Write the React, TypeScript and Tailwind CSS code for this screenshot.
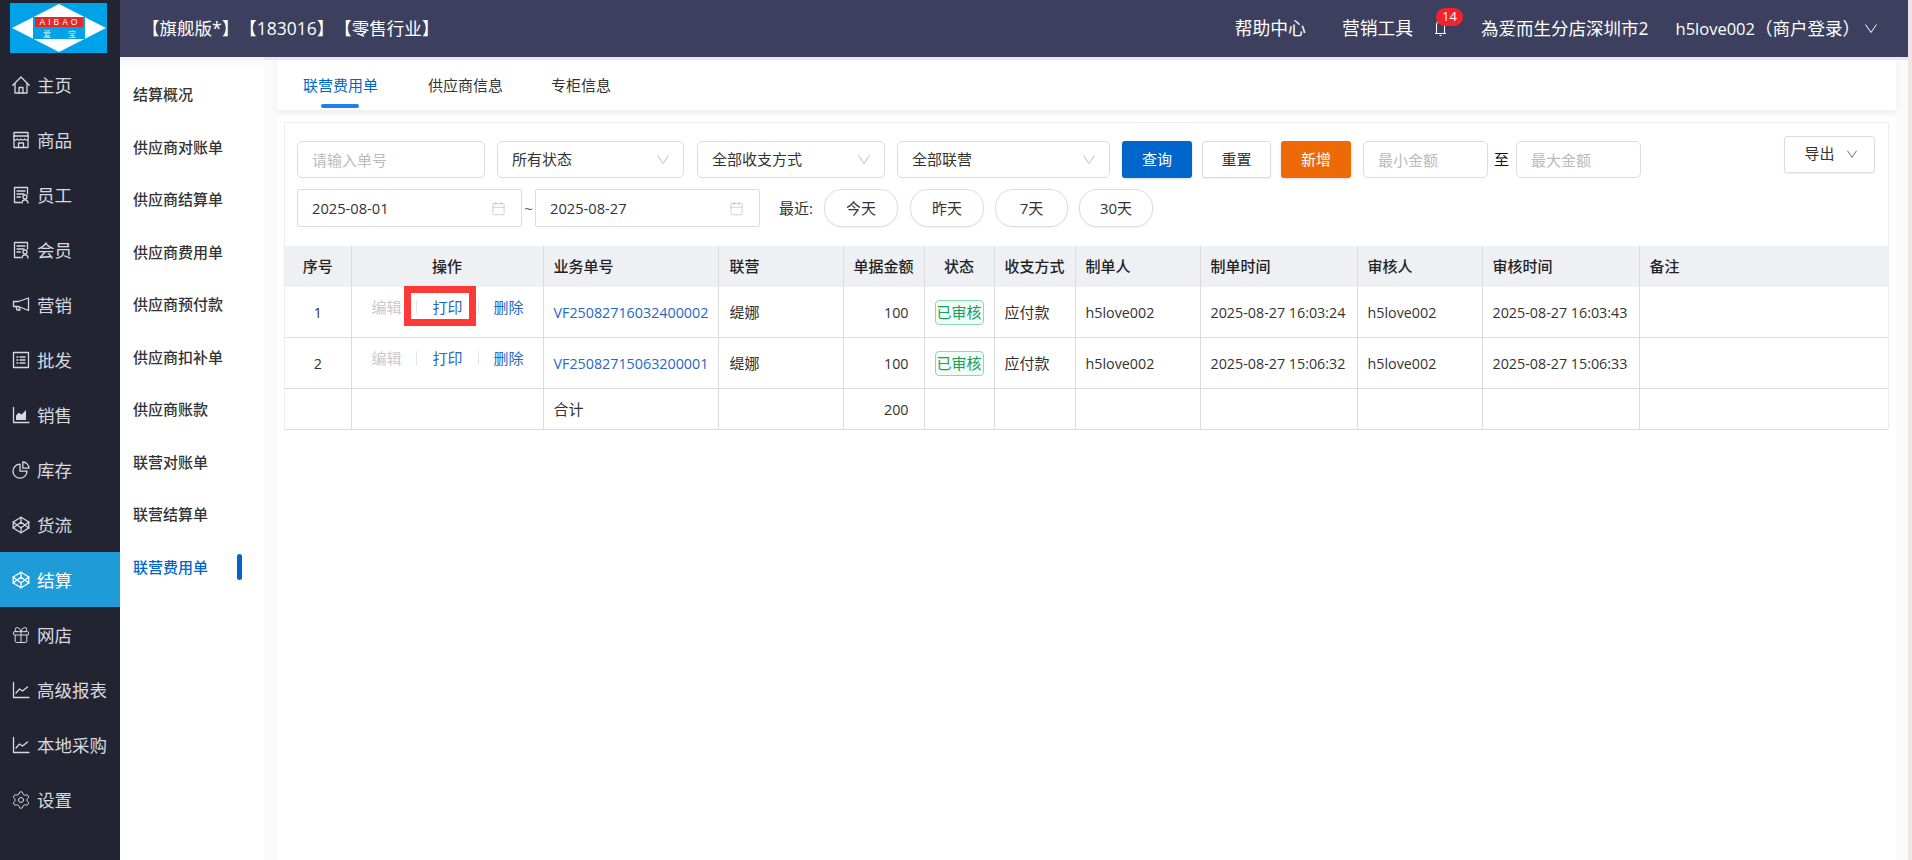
import React from "react";
import { Gift, Settings, Calendar } from "lucide-react";

const S = { fill: "none", stroke: "currentColor", strokeWidth: 1.3, strokeLinejoin: "round" as const, strokeLinecap: "round" as const };
const Svg = ({ children }: { children: React.ReactNode }) => (
  <svg width="18" height="18" viewBox="0 0 18 18" {...S} className="shrink-0">{children}</svg>
);
const Home = () => <Svg><path d="M.8 9.2 9 1l8.2 8.2" /><path d="M3 7.5V17h12V7.5" /><path d="M7 17v-5.5h4V17" /></Svg>;
const Store = () => <Svg><path d="M2 5V1.5h14V5" /><path d="M1.8 5h14.4v3a2 2 0 0 1-3.6 0 2 2 0 0 1-3.6 0 2 2 0 0 1-3.6 0 2 2 0 0 1-3.6 0z" /><path d="M2 9v7.5h14V9" /><path d="M6.5 16.5v-4.5h5v4.5" /></Svg>;
const Staff = () => <Svg><path d="M15.5 8V1.5h-13v15h6" /><path d="M5 5h8M5 8h7M5 11h3.5" /><circle cx="13" cy="11" r="2" /><path d="M10 17c0-2 1.300-3.200 3-3.200s3 1.200 3 3.200" /></Svg>;
const Horn = () => <Svg><path d="M16.500 2 6.500 5.500H1.500v5h5l10 4z" /><path d="M4 10.500 5 14h3l-.8-2.500" /></Svg>;
const ListBox = () => <Svg><rect x="1.500" y="1.500" width="15" height="15" /><path d="M8 6h5M8 9h5M8 12h5" /><path d="M5 6h.8M5 9h.8M5 12h.8" strokeWidth="1.600" /></Svg>;
const AreaChart = () => <Svg><path d="M1.500 1.500v15h15.500" /><path d="M4 14V9.500l2.700-2.700 3 1.800L14 4v10z" fill="currentColor" stroke="none" /></Svg>;
const Pie = () => <Svg><path d="M8 3.200a7 7 0 1 0 7 7H8z" /><path d="M10.800 1a6.500 6.500 0 0 1 6.200 6.200h-6.200z" /></Svg>;
const Cube = () => <Svg><path d="M9 1.200 16.800 6v6L9 16.800 1.200 12V6z" /><path d="M9 6.200 13 9l-4 2.800L5 9z" /><path d="M9 1.200v5M9 11.800v5M1.200 6 5 9 1.200 12M16.800 6 13 9l3.800 3" /></Svg>;
const Line = () => <Svg><path d="M1.500 1.500v15h15.500" /><path d="M4 12l3.500-4 3 2 5-4" /></Svg>;
const Chevron = ({ w = 12, h = 9, c = "#bdbdbd" }: { w?: number; h?: number; c?: string }) => (
  <svg width={w} height={h} viewBox="0 0 12 9" fill="none" stroke={c} strokeWidth="1" className="shrink-0"><path d="M.5.5 6 8.500 11.500.5" /></svg>
);
const Bell = () => (
  <svg width="13" height="17" viewBox="0 0 13 17" fill="none" stroke="#fff" strokeWidth="1.100"><path d="M1 13.500h11M2.500 13.500V5a4 4 0 0 1 8 0v8.500" /><path d="M5.500 15.500h2" /></svg>
);

const menu: [string, React.ReactNode][] = [
  ["主页", <Home />], ["商品", <Store />], ["员工", <Staff />], ["会员", <Staff />], ["营销", <Horn />],
  ["批发", <ListBox />], ["销售", <AreaChart />], ["库存", <Pie />], ["货流", <Cube />], ["结算", <Cube />],
  ["网店", <Gift size={20} strokeWidth={1.2} className="shrink-0 -mx-px" />], ["高级报表", <Line />], ["本地采购", <Line />], ["设置", <Settings size={20} strokeWidth={1.2} className="shrink-0 -mx-px" />],
];
const sub = ["结算概况", "供应商对账单", "供应商结算单", "供应商费用单", "供应商预付款", "供应商扣补单", "供应商账款", "联营对账单", "联营结算单", "联营费用单"];

const Latin = ({ children }: { children: React.ReactNode }) => <span className="text-[14.300px]">{children}</span>;

function Select({ label, w }: { label: string; w: string }) {
  return (
    <div className={`${w} h-[37px] shrink-0 flex items-center justify-between pl-[14px] pr-[14px] border border-[#dcdcdc] rounded-[5px] bg-white text-[#333]`}>
      <span>{label}</span>
      <Chevron />
    </div>
  );
}
function DateBox({ v, w }: { v: string; w: string }) {
  return (
    <div className={`${w} h-[38px] shrink-0 flex items-center justify-between pl-[14px] pr-[15px] border border-[#dcdcdc] rounded-[2px] bg-white text-[#333]`}>
      <span className="text-[14.700px]">{v}</span>
      <Calendar size={15} strokeWidth={1} color="#b5b5b5" />
    </div>
  );
}
const Pill = ({ t, w }: { t: string; w: string }) => (
  <div className={`${w} h-[38px] flex items-center justify-center rounded-[18px] border border-[#dddddd] bg-white text-[#333] shadow-[0_1px_2px_rgba(0,0,0,0.06)]`}>{t}</div>
);

const Ops = ({ boxed }: { boxed?: boolean }) => (
  <div className="relative h-[50px]">
    <div className="flex items-center justify-center h-full pb-[10px] pl-[1px]">
      <span className="text-[#c8c8c8]">编辑</span>
      <span className="mx-[15px] w-px h-[14px] bg-[#e4e4e4]" />
      <span className="text-[#2468c8]">打印</span>
      <span className="mx-[15px] w-px h-[14px] bg-[#e4e4e4]" />
      <span className="text-[#2468c8]">删除</span>
    </div>
    {boxed && <div className="absolute left-[52px] top-[-1px] w-[72px] h-[40px] border-[7px] border-[#ff3838]" />}
  </div>
);

const Tag = () => (
  <span className="inline-flex items-center justify-center w-[49px] h-[25px] rounded-[4px] border border-[#86dcae] bg-[#f2fbf6] text-[#18a058] whitespace-nowrap">已审核</span>
);

const th = "border-r border-[#dcdcdc] font-medium text-[#222] align-middle";
const td = "border-r border-b border-[#dcdcdc] p-0 align-middle text-[#333]";

function Row({ n, code, t1, t2, boxed }: { n: string; code: string; t1: string; t2: string; boxed?: boolean }) {
  return (
    <tr className={n === "1" ? "h-[50px]" : "h-[51px]"}>
      <td className={`${td} text-center`}><Latin>{n}</Latin></td>
      <td className={td}><Ops boxed={boxed} /></td>
      <td className={`${td} pl-[10px] text-[#2468c8]`}><Latin>{code}</Latin></td>
      <td className={`${td} pl-[11px]`}>缇娜</td>
      <td className={`${td} text-right pr-[15px]`}><Latin>100</Latin></td>
      <td className={`${td} text-center`}><Tag /></td>
      <td className={`${td} pl-[10px]`}>应付款</td>
      <td className={`${td} pl-[10px]`}><Latin>h5love002</Latin></td>
      <td className={`${td} pl-[10px]`}><Latin>{t1}</Latin></td>
      <td className={`${td} pl-[10px]`}><Latin>h5love002</Latin></td>
      <td className={`${td} pl-[10px]`}><Latin>{t2}</Latin></td>
      <td className={`${td} border-r-0`}></td>
    </tr>
  );
}

export default function App() {
  return (
    <div className="w-[1912px] h-[860px] flex overflow-hidden bg-[#f0e4e4] text-[15px] [text-spacing-trim:space-all] font-['Open_Sans','Noto_Sans_CJK_SC',sans-serif]">
      <aside className="w-[120px] shrink-0 bg-[#222531] text-[#d8d9e0]">
        <div className="h-[57px] pl-[10px] pt-[3px]">
          <svg width="97" height="50" viewBox="0 0 97 50">
            <rect width="97" height="50" fill="#00a2e8" />
            <polygon points="2,25 49,1 96,25 49,49" fill="#fff" />
            <rect x="23" y="14" width="52" height="22" fill="#00a2e8" />
            <rect x="25" y="14" width="48" height="10" fill="#e02a2a" />
            <text x="50" y="22" textAnchor="middle" fill="#fff" fontSize="8.500" letterSpacing="3" fontFamily="Liberation Sans, sans-serif">AIBAO</text>
            <text x="37" y="33.500" textAnchor="middle" fill="#dff3ff" fontSize="8" fontFamily="Noto Sans CJK SC, sans-serif">爱</text>
            <text x="62" y="33.500" textAnchor="middle" fill="#dff3ff" fontSize="8" fontFamily="Noto Sans CJK SC, sans-serif">宝</text>
          </svg>
        </div>
        {menu.map(([t, ic]) => (
          <div key={t} className={`h-[55px] flex items-center gap-[7px] pl-[12px] text-[17.500px] whitespace-nowrap ${t === "结算" ? "bg-[#1f9bd7] text-white" : ""}`}>
            {ic}
            <span className="pt-px">{t}</span>
          </div>
        ))}
      </aside>

      <div className="w-[1788px] shrink-0 flex flex-col">
        <header className="h-[57px] shrink-0 bg-[#3d3f5e] text-white flex items-center pl-[22px] pr-[31px] text-[17.500px] whitespace-nowrap">
          <div>【旗舰版*】【183016】【零售行业】</div>
          <div className="ml-auto flex items-center">
            <span className="text-[17.800px]">帮助中心</span>
            <span className="ml-[36px] text-[17.800px]">营销工具</span>
            <div className="relative ml-[21px] flex items-center">
              <Bell />
              <span className="absolute left-[2px] top-[-12px] w-[27px] h-[18px] rounded-full bg-[#f5222d] text-white text-[13px] flex items-center justify-center">14</span>
            </div>
            <span className="ml-[34px]">為爱而生分店深圳市2</span>
            <span className="ml-[27px]"><span className="text-[16.500px]">h5love002</span>（商户登录）</span>
            <span className="ml-[5px]"><Chevron c="#ffffff" /></span>
          </div>
        </header>

        <div className="flex-1 flex min-h-0">
          <nav className="w-[144px] shrink-0 bg-white">
            <div className="h-[11px] bg-linear-to-b from-[#f3f3f6] to-white" />
            {sub.map((t, i) => (
              <div key={t + i} className={`relative h-[52.500px] flex items-center pl-[13px] font-medium whitespace-nowrap ${i === 9 ? "text-[#0066cc]" : "text-[#333]"}`}>
                {t}
                {i === 9 && <span className="absolute left-[117px] top-[13px] w-[5px] h-[26px] rounded-[3px] bg-[#0066cc]" />}
              </div>
            ))}
          </nav>

          <main className="flex-1 flex flex-col bg-[#fafafa] pl-[13px] pr-[12px] border-t-[3px] border-[#e8e8f0]">
            <div className="h-[50px] shrink-0 bg-white flex items-start pl-[26px] shadow-[0_2px_6px_rgba(0,0,0,0.06)] text-[#333]">
              <div className="relative h-[50px] flex items-center mr-[50px] text-[#0066cc]">
                联营费用单
                <span className="absolute left-[18px] top-[44px] w-[38px] h-[4px] rounded-[2px] bg-[#2080f0]" />
              </div>
              <div className="h-[50px] flex items-center mr-[48px]">供应商信息</div>
              <div className="h-[50px] flex items-center">专柜信息</div>
            </div>

            <div className="flex-1 mt-[6px] bg-white px-[7px] pt-[6px]">
              <section className="border border-b-0 border-[#eeeeee]">
                <div className="px-[12px] pt-[18px] pb-[19px]">
                  <div className="flex items-start">
                    <input placeholder="请输入单号" className="w-[188px] h-[37px] px-[14px] border border-[#dcdcdc] rounded-[5px] outline-none placeholder:text-[#bbbbbb]" />
                    <div className="ml-[12px]"><Select label="所有状态" w="w-[187px]" /></div>
                    <div className="ml-[13px]"><Select label="全部收支方式" w="w-[188px]" /></div>
                    <div className="ml-[12px]"><Select label="全部联营" w="w-[213px]" /></div>
                    <button className="ml-[12px] w-[70px] h-[37px] rounded-[3px] bg-[#0066cc] text-white shadow-[0_1px_3px_rgba(0,0,0,0.15)]">查询</button>
                    <button className="ml-[10px] w-[69px] h-[37px] rounded-[3px] border border-[#dcdcdc] bg-white text-[#333] shadow-[0_1px_2px_rgba(0,0,0,0.08)]">重置</button>
                    <button className="ml-[10px] w-[70px] h-[37px] rounded-[3px] bg-[#ee6a06] text-white shadow-[0_1px_3px_rgba(0,0,0,0.15)]">新增</button>
                    <input placeholder="最小金额" className="ml-[12px] w-[125px] h-[37px] px-[14px] border border-[#dcdcdc] rounded-[5px] outline-none placeholder:text-[#bbbbbb]" />
                    <span className="ml-[6px] w-[22px] h-[37px] flex items-center text-[#111]">至</span>
                    <input placeholder="最大金额" className="w-[125px] h-[37px] px-[14px] border border-[#dcdcdc] rounded-[5px] outline-none placeholder:text-[#bbbbbb]" />
                    <button className="ml-auto mr-[1px] mt-[-5px] w-[91px] h-[37px] flex items-center justify-center gap-[12px] pl-[2px] pb-[2px] border border-[#dcdcdc] rounded-[3px] bg-white text-[#333] shadow-[0_1px_2px_rgba(0,0,0,0.06)]">
                      导出 <Chevron w={10} h={8} c="#555" />
                    </button>
                  </div>
                  <div className="flex items-center mt-[11px]">
                    <DateBox v="2025-08-01" w="w-[225px]" />
                    <span className="w-[13px] text-center text-[#555]">~</span>
                    <DateBox v="2025-08-27" w="w-[225px]" />
                    <span className="ml-[19px] text-[#333]">最近:</span>
                    <div className="ml-[11px] flex">
                      <Pill t="今天" w="w-[74px]" />
                      <div className="ml-[12px]"><Pill t="昨天" w="w-[74px]" /></div>
                      <div className="ml-[11px]"><Pill t="7天" w="w-[73px]" /></div>
                      <div className="ml-[11px]"><Pill t="30天" w="w-[74px]" /></div>
                    </div>
                  </div>
                </div>
                <table className="w-[1603px] table-fixed border-collapse whitespace-nowrap">
                  <colgroup>
                    <col className="w-[66px]" /><col className="w-[192px]" /><col className="w-[175px]" /><col className="w-[125px]" />
                    <col className="w-[81px]" /><col className="w-[70px]" /><col className="w-[81px]" /><col className="w-[125px]" />
                    <col className="w-[157px]" /><col className="w-[125px]" /><col className="w-[157px]" /><col />
                  </colgroup>
                  <thead>
                    <tr className="h-[41px] bg-[#eff0f4]">
                      <th className={`${th} text-center`}>序号</th>
                      <th className={`${th} text-center`}>操作</th>
                      <th className={`${th} text-left pl-[10px]`}>业务单号</th>
                      <th className={`${th} text-left pl-[11px]`}>联营</th>
                      <th className={`${th} text-center`}>单据金额</th>
                      <th className={`${th} text-center`}>状态</th>
                      <th className={`${th} text-left pl-[10px]`}>收支方式</th>
                      <th className={`${th} text-left pl-[10px]`}>制单人</th>
                      <th className={`${th} text-left pl-[10px]`}>制单时间</th>
                      <th className={`${th} text-left pl-[10px]`}>审核人</th>
                      <th className={`${th} text-left pl-[10px]`}>审核时间</th>
                      <th className={`${th} text-left pl-[10px] border-r-0`}>备注</th>
                    </tr>
                  </thead>
                  <tbody>
                    <Row n="1" code="VF25082716032400002" t1="2025-08-27 16:03:24" t2="2025-08-27 16:03:43" boxed />
                    <Row n="2" code="VF25082715063200001" t1="2025-08-27 15:06:32" t2="2025-08-27 15:06:33" />
                    <tr className="h-[41px]">
                      <td className={td}></td>
                      <td className={td}></td>
                      <td className={`${td} pl-[10px]`}>合计</td>
                      <td className={td}></td>
                      <td className={`${td} text-right pr-[15px]`}><Latin>200</Latin></td>
                      <td className={td}></td><td className={td}></td><td className={td}></td><td className={td}></td><td className={td}></td><td className={td}></td>
                      <td className={`${td} border-r-0`}></td>
                    </tr>
                  </tbody>
                </table>
              </section>
            </div>
          </main>
        </div>
      </div>
    </div>
  );
}
